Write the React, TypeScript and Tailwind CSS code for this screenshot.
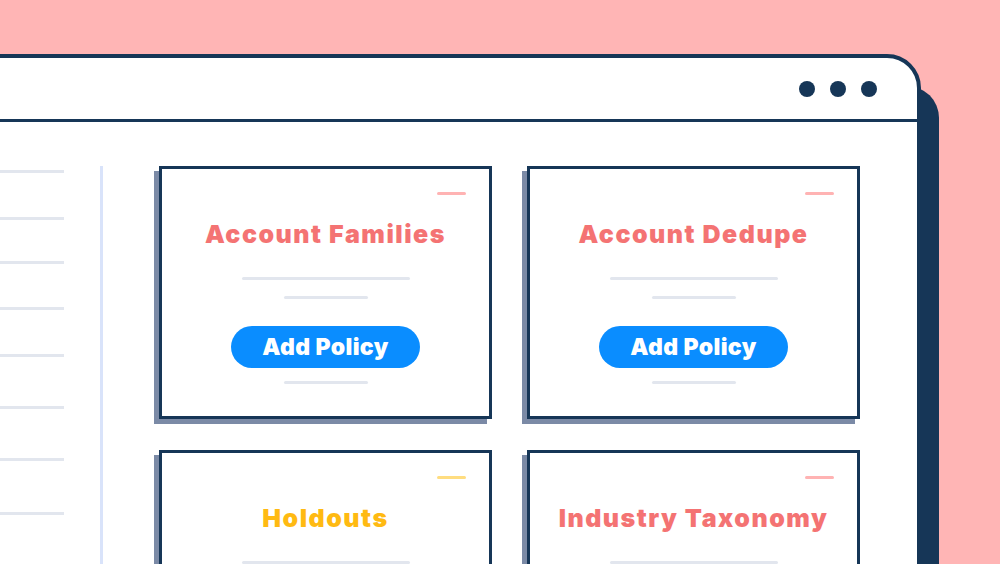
import React from 'react';

interface Policy {
  title: string;
  tone: 'coral' | 'yellow';
  full: boolean;
}

const policies: Policy[] = [
  { title: 'Account Families', tone: 'coral', full: true },
  { title: 'Account Dedupe', tone: 'coral', full: true },
  { title: 'Holdouts', tone: 'yellow', full: false },
  { title: 'Industry Taxonomy', tone: 'coral', full: false },
];

// gap above each sidebar rule (px)
const sideGaps = ['mt-[4px]', 'mt-[44px]', 'mt-[41px]', 'mt-[43px]', 'mt-[44px]', 'mt-[49px]', 'mt-[49px]', 'mt-[51px]'];

const PolicyCard: React.FC<{ policy: Policy }> = ({ policy }) => {
  const coral = policy.tone === 'coral';
  return (
    <div className="h-[253px] bg-white border-[3px] border-[#163657] shadow-[-5px_5px_0_#7b8aa6] flex flex-col items-center">
      <div className="w-full flex justify-end pt-[23px] pr-[23px]">
        <div className={`w-[29px] h-[3px] rounded-full ${coral ? 'bg-[#ffb3b3]' : 'bg-[#ffdd80]'}`} />
      </div>
      <h3
        className={`mt-[23px] text-[25px] leading-[32px] font-black tracking-[1.5px] ${
          coral ? 'text-[#f47373]' : 'text-[#ffba12]'
        }`}
      >
        {policy.title}
      </h3>
      <div className="mt-[27px] w-[168px] h-[3px] rounded-full bg-[#e2e6ee]" />
      {policy.full && (
        <>
          <div className="mt-[16px] w-[84px] h-[3px] rounded-full bg-[#e2e6ee]" />
          <button className="mt-[27px] w-[189px] h-[42px] rounded-full bg-[#0a8dff] text-white text-[23px] font-black tracking-[0.4px] flex items-center justify-center">
            Add Policy
          </button>
          <div className="mt-[13px] w-[84px] h-[3px] rounded-full bg-[#e2e6ee]" />
        </>
      )}
    </div>
  );
};

export default function App() {
  return (
    <div
      className="relative w-[1000px] h-[564px] overflow-hidden bg-[#ffb5b5]"
      style={{ fontFamily: 'Inter, "Liberation Sans", Arial, sans-serif' }}
    >
      {/* back panel of the window */}
      <div className="absolute left-[-40px] top-[86px] w-[979px] h-[600px] bg-[#163657] rounded-tr-[32px]" />

      {/* browser window */}
      <div className="absolute left-[-40px] top-[54px] w-[961px] h-[600px] bg-white border-4 border-[#163657] rounded-tr-[34px] flex flex-col">
        <div className="h-[64px] shrink-0 border-b-[3px] border-[#163657] flex items-center justify-end gap-[15px] pr-[40px]">
          <span className="w-[16px] h-[16px] rounded-full bg-[#163657]" />
          <span className="w-[16px] h-[16px] rounded-full bg-[#163657]" />
          <span className="w-[16px] h-[16px] rounded-full bg-[#163657]" />
        </div>

        <div className="flex pt-[44px] flex-1">
          {/* sidebar */}
          <div className="w-[100px] shrink-0 flex flex-col">
            {sideGaps.map((g, i) => (
              <div key={i} className={`${g} h-[3px] w-full bg-[#e2e6ee]`} />
            ))}
          </div>
          <div className="ml-[36px] w-[3px] bg-[#d9e3fa] self-stretch" />

          {/* policy cards */}
          <div className="ml-[56px] grid grid-cols-[333px_333px] gap-x-[35px] gap-y-[31px] content-start">
            {policies.map((p) => (
              <PolicyCard key={p.title} policy={p} />
            ))}
          </div>
        </div>
      </div>
    </div>
  );
}
